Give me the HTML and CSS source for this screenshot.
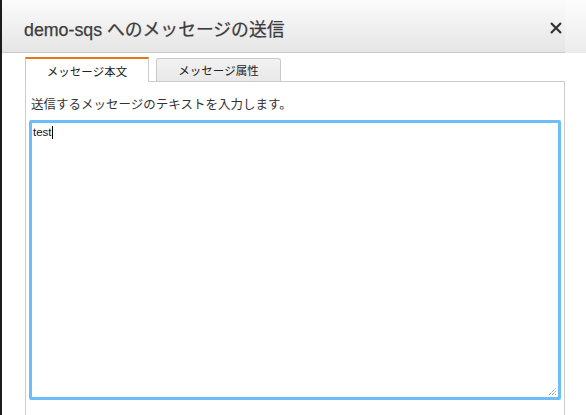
FILE: index.html
```html
<!DOCTYPE html>
<html lang="ja">
<head>
<meta charset="utf-8">
<title>demo-sqs へのメッセージの送信</title>
<link rel="stylesheet" href="styles.css">
</head>
<body>
<div class="modal">
  <div class="header">
    <div class="header-main">
      <h1 class="title">demo-sqs へのメッセージの送信</h1>
      <button class="close" aria-label="閉じる">
        <svg width="12" height="12" viewBox="0 0 12 12"><path d="M1 1L11 11M11 1L1 11" stroke="#333" stroke-width="2.2" fill="none"/></svg>
      </button>
    </div>
    <div class="header-gutter"></div>
  </div>
  <div class="content">
    <div class="tabs">
      <div class="tab active">メッセージ本文</div>
      <div class="tab">メッセージ属性</div>
    </div>
    <div class="panel">
      <label class="label">送信するメッセージのテキストを入力します。</label>
      <div class="textarea">test<span class="caret"></span>
        <svg class="grip" width="9" height="9" viewBox="0 0 9 9"><path d="M1 8L8 1M4 8L8 4M7 8L8 7" stroke="#666" stroke-width="1" stroke-dasharray="1 1" fill="none"/></svg>
      </div>
    </div>
  </div>
</div>
</body>
</html>
```
FILE: styles.css
```css
html, body {
  margin: 0;
  padding: 0;
  background: #fff;
}
body {
  font-family: "Liberation Sans", "Noto Sans CJK JP", sans-serif;
  color: #333;
}
.modal {
  height: 415px;
  border-left: 2px solid #1c1c1c;
  overflow: hidden;
  background: #fff;
}
.header {
  display: flex;
  height: 53px;
}
.header-main {
  flex: 1;
  display: flex;
  align-items: center;
  justify-content: space-between;
  padding: 0 3px 0 22px;
  background: linear-gradient(#fbfbfb, #e5e5e5);
  border-bottom: 1px solid #c9c9c9;
}
.header-gutter {
  width: 21px;
  background: linear-gradient(#fcfcfc, #ececec);
}
.title {
  margin: 0;
  font-size: 17.8px;
  font-weight: normal;
  color: #3c3c3c;
  letter-spacing: 0;
  padding-top: 4px;
  -webkit-text-stroke: 0.25px #3c3c3c;
}
.close {
  border: 0;
  background: none;
  padding: 0;
  width: 12px;
  height: 12px;
  margin-top: 4px;
  display: flex;
}
.content {
  padding: 5px 21px 0 23px;
}
.tabs {
  display: flex;
  align-items: flex-end;
  gap: 7px;
  border-bottom: 1px solid #ccc;
  height: 23px;
}
.tab {
  box-sizing: border-box;
  width: 125px;
  height: 23px;
  font-size: 11.5px;
  color: #222;
  display: flex;
  align-items: center;
  justify-content: center;
  background: linear-gradient(#f2f2f2, #e8e8e8);
  border: 1px solid #c9c9c9;
  border-bottom: 0;
  border-radius: 3px 3px 0 0;
}
.tab.active {
  width: 124px;
  height: 25px;
  margin-bottom: -1px;
  background: #fff;
  border-top: 2px solid #e97711;
  border-radius: 0;
  border-right-color: #ccc;
  padding-top: 1px;
}
.panel {
  border: 1px solid #ccc;
  border-top: 0;
  height: 340px;
  padding: 16px 4px 0 3px;
}
.label {
  display: block;
  font-size: 12.5px;
  color: #333;
  line-height: 15px;
  margin-left: 2px;
  margin-bottom: 7px;
}
.textarea {
  position: relative;
  box-sizing: border-box;
  width: 532px;
  height: 280px;
  border: 3px solid #6dbdf7;
  border-radius: 2px;
  padding: 3px 1px;
  font-size: 11.5px;
  line-height: 13px;
  color: #111;
  background: #fff;
}
.caret {
  display: inline-block;
  width: 1px;
  height: 13px;
  background: #000;
  vertical-align: top;
}
.grip {
  position: absolute;
  right: 1px;
  bottom: 1px;
}
```
